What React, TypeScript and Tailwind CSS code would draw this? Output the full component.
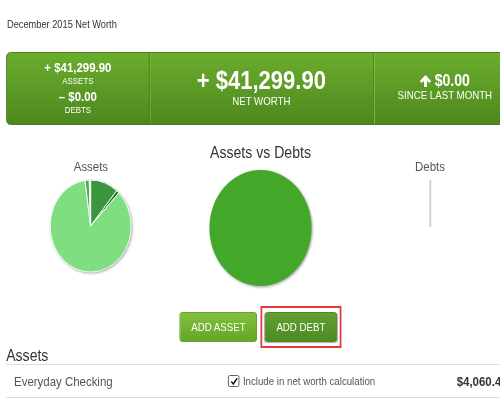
import React from "react";

const font = { fontFamily: '"Liberation Sans", Arial, sans-serif' };

function ArrowUpIcon() {
  return (
    <svg viewBox="0 0 12 12" preserveAspectRatio="none" className="w-[13px] h-[12px]" fill="#ffffff">
      <path d="M6 0 L12 6 L9.9 8.1 L7.5 5.7 V12 H4.5 V5.7 L2.1 8.1 L0 6 Z" />
    </svg>
  );
}

function AssetsPie() {
  return (
    <svg
      viewBox="0 0 96 96"
      className="w-[96px] h-[96px] drop-shadow-[1px_1px_1px_rgba(0,0,0,0.35)]"
    >
      <g stroke="#ffffff" strokeWidth="1" strokeLinejoin="round">
        <path d="M48 48 L48 2 A46 46 0 0 1 77.57 12.76 Z" fill="#3b953e" />
        <path d="M48 48 L77.57 12.76 A46 46 0 0 1 79.96 14.91 Z" fill="#1f6b22" />
        <path d="M48 48 L79.96 14.91 A46 46 0 1 1 41.6 2.45 Z" fill="#7ede80" />
        <path d="M48 48 L41.6 2.45 A46 46 0 0 1 46.39 2.03 Z" fill="#4dae50" />
        <path d="M48 48 L46.39 2.03 A46 46 0 0 1 48 2 Z" fill="#9fe5a0" />
      </g>
    </svg>
  );
}

function VsPie() {
  return (
    <svg
      viewBox="0 0 120 120"
      className="w-[120px] h-[120px] drop-shadow-[1px_1px_1.5px_rgba(0,0,0,0.4)]"
    >
      <circle cx="60" cy="60" r="58" fill="#43a829" />
    </svg>
  );
}

function CheckBox() {
  return (
    <span className="flex items-center justify-center w-[13px] h-[12px] border border-[#5a5a5a] bg-white rounded-[2px]">
      <svg viewBox="0 0 10 10" className="w-[10px] h-[9px]">
        <path d="M1.5 5 L4 7.8 L8.8 1.5" fill="none" stroke="#111" strokeWidth="1.8" />
      </svg>
    </span>
  );
}

export default function App() {
  return (
    <div className="w-[500px] h-[400px] overflow-hidden bg-white" style={font}>
      <div className="w-[590px] origin-top-left scale-x-[0.88] pl-[7px]">
        <div className="pt-[18px] pl-[1px] text-[10.5px] leading-[12px] text-[#333]">
          December 2015 Net Worth
        </div>

        {/* Banner */}
        <div className="mt-[22px] w-[580px] h-[73px] grid grid-cols-[161px_255px_1fr] rounded-l-[5px] border border-[#3f7319] bg-linear-to-b from-[#6cad2d] to-[#4d881f] text-white">
          <div className="flex flex-col items-center pt-[8px]">
            <div className="text-[13px] leading-[13px] font-bold">+ $41,299.90</div>
            <div className="mt-[3px] text-[9px] leading-[9px]">ASSETS</div>
            <div className="mt-[4px] text-[13px] leading-[13px] font-bold">– $0.00</div>
            <div className="mt-[3px] text-[9px] leading-[9px]">DEBTS</div>
          </div>
          <div className="flex flex-col items-center pt-[15px] border-l border-[#4a8520] shadow-[inset_1px_0_0_#80bd48]">
            <div className="text-[25px] leading-[25px] font-bold">+ $41,299.90</div>
            <div className="mt-[3px] text-[11px] leading-[11px]">NET WORTH</div>
          </div>
          <div className="flex flex-col items-center pt-[20px] border-l border-[#4a8520] shadow-[inset_1px_0_0_#80bd48]">
            <div className="flex items-center gap-[4px]">
              <ArrowUpIcon />
              <span className="text-[16px] leading-[16px] font-bold">$0.00</span>
            </div>
            <div className="mt-[1px] text-[11px] leading-[11px]">SINCE LAST MONTH</div>
          </div>
        </div>

        {/* Charts */}
        <div className="w-[578px] mt-[19px] grid grid-cols-3 items-start">
          <div className="flex flex-col items-center pt-[15px]">
            <div className="text-[13px] leading-[15px] text-[#555]">Assets</div>
            <div className="mt-[4px]">
              <AssetsPie />
            </div>
          </div>
          <div className="flex flex-col items-center">
            <div className="text-[16px] leading-[18px] text-[#333]">Assets vs Debts</div>
            <div className="mt-[6px]">
              <VsPie />
            </div>
          </div>
          <div className="flex flex-col items-center pt-[15px]">
            <div className="text-[13px] leading-[15px] text-[#555]">Debts</div>
            <div className="mt-[6px] w-[2px] h-[47px] bg-[#cccccc]" />
          </div>
        </div>

        {/* Buttons */}
        <div className="w-[578px] mt-[18px] flex justify-center items-center gap-[4px]">
          <button className="h-[30px] px-[12px] rounded-[3px] border border-[#5c9c24] bg-linear-to-b from-[#80c03a] to-[#66a628] text-white text-[11px] leading-[11px]">
            ADD ASSET
          </button>
          <div className="border-2 border-[#e53b3b] px-[3px] py-[4px]">
            <button className="h-[30px] px-[12px] rounded-[3px] border border-[#447a1c] bg-linear-to-b from-[#63a032] to-[#4d8a23] text-white text-[11px] leading-[11px] shadow-[0_1px_1px_rgba(0,0,0,0.3)]">
              ADD DEBT
            </button>
          </div>
        </div>

        {/* Assets list */}
        <div className="text-[16px] leading-[16px] text-[#333] border-b border-[#dddddd]">Assets</div>
        <div className="h-[33px] flex items-center border-b border-[#dddddd]">
          <div className="w-[252px] pl-[9px] text-[13px] leading-[15px] text-[#555]">Everyday Checking</div>
          <div className="w-[260px] flex items-center gap-[4px]">
            <CheckBox />
            <span className="text-[11px] leading-[12px] text-[#555]">Include in net worth calculation</span>
          </div>
          <div className="text-[13px] leading-[15px] font-bold text-[#333]">$4,060.45</div>
        </div>
      </div>
    </div>
  );
}
